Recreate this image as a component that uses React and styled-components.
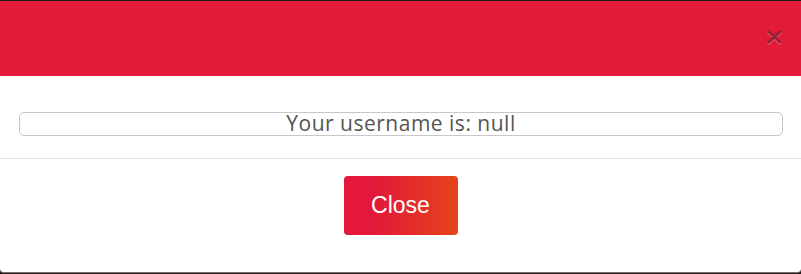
import React from 'react';
import styled, { createGlobalStyle } from 'styled-components';

const GlobalStyle = createGlobalStyle`
  html, body {
    margin: 0;
    padding: 0;
    background: #2b1f1f;
  }
  body {
    font-family: 'Open Sans', 'Liberation Sans', sans-serif;
  }
`;

const Page = styled.div`
  width: 801px;
  padding-top: 1px;
  background: #1c1c1c;
`;

const Modal = styled.div`
  display: flex;
  flex-direction: column;
  width: 801px;
  height: 271px;
  background: #fff;
  border-bottom: 1px solid #707070;
  border-radius: 0 0 4px 4px;
  overflow: hidden;
`;

const Header = styled.div`
  display: flex;
  align-items: center;
  justify-content: flex-end;
  height: 75px;
  padding: 0 18px 2px 0;
  box-sizing: border-box;
  background: #e31a38;
`;

const CloseX = styled.button`
  display: flex;
  border: 0;
  background: transparent;
  padding: 0;
  opacity: 0.55;
  cursor: pointer;
`;

const Body = styled.div`
  padding: 36px 18px 22px 19px;
  border-bottom: 1px solid #e2e2e2;
`;

const Field = styled.div`
  height: 22px;
  border: 1px solid #c8c8c8;
  border-radius: 5px;
  font-size: 21px;
  line-height: 20px;
  color: #555;
  text-align: center;
  letter-spacing: 0.5px;
`;

const Footer = styled.div`
  display: flex;
  justify-content: center;
  padding-top: 17px;
`;

const Button = styled.button`
  width: 114px;
  height: 59px;
  border: 0;
  border-radius: 4px;
  background: linear-gradient(to right, #e3183a 25%, #e5431a);
  color: #fff;
  font-family: 'Liberation Sans', Arial, sans-serif;
  font-size: 23px;
  cursor: pointer;
`;

const XIcon = () => (
  <svg width="17" height="17" viewBox="0 0 17 17">
    <path d="M2 3 L15 15 M15 3 L2 15" stroke="#f7b0bb" strokeWidth="3" />
    <path d="M2 2 L15 14 M15 2 L2 14" stroke="#5a2a35" strokeWidth="3" />
  </svg>
);

const App = () => {
  return (
    <Page>
      <GlobalStyle />
      <Modal>
        <Header>
          <CloseX aria-label="close">
            <XIcon />
          </CloseX>
        </Header>
        <Body>
          <Field>Your username is: null</Field>
        </Body>
        <Footer>
          <Button>Close</Button>
        </Footer>
      </Modal>
    </Page>
  );
};

export default App;
